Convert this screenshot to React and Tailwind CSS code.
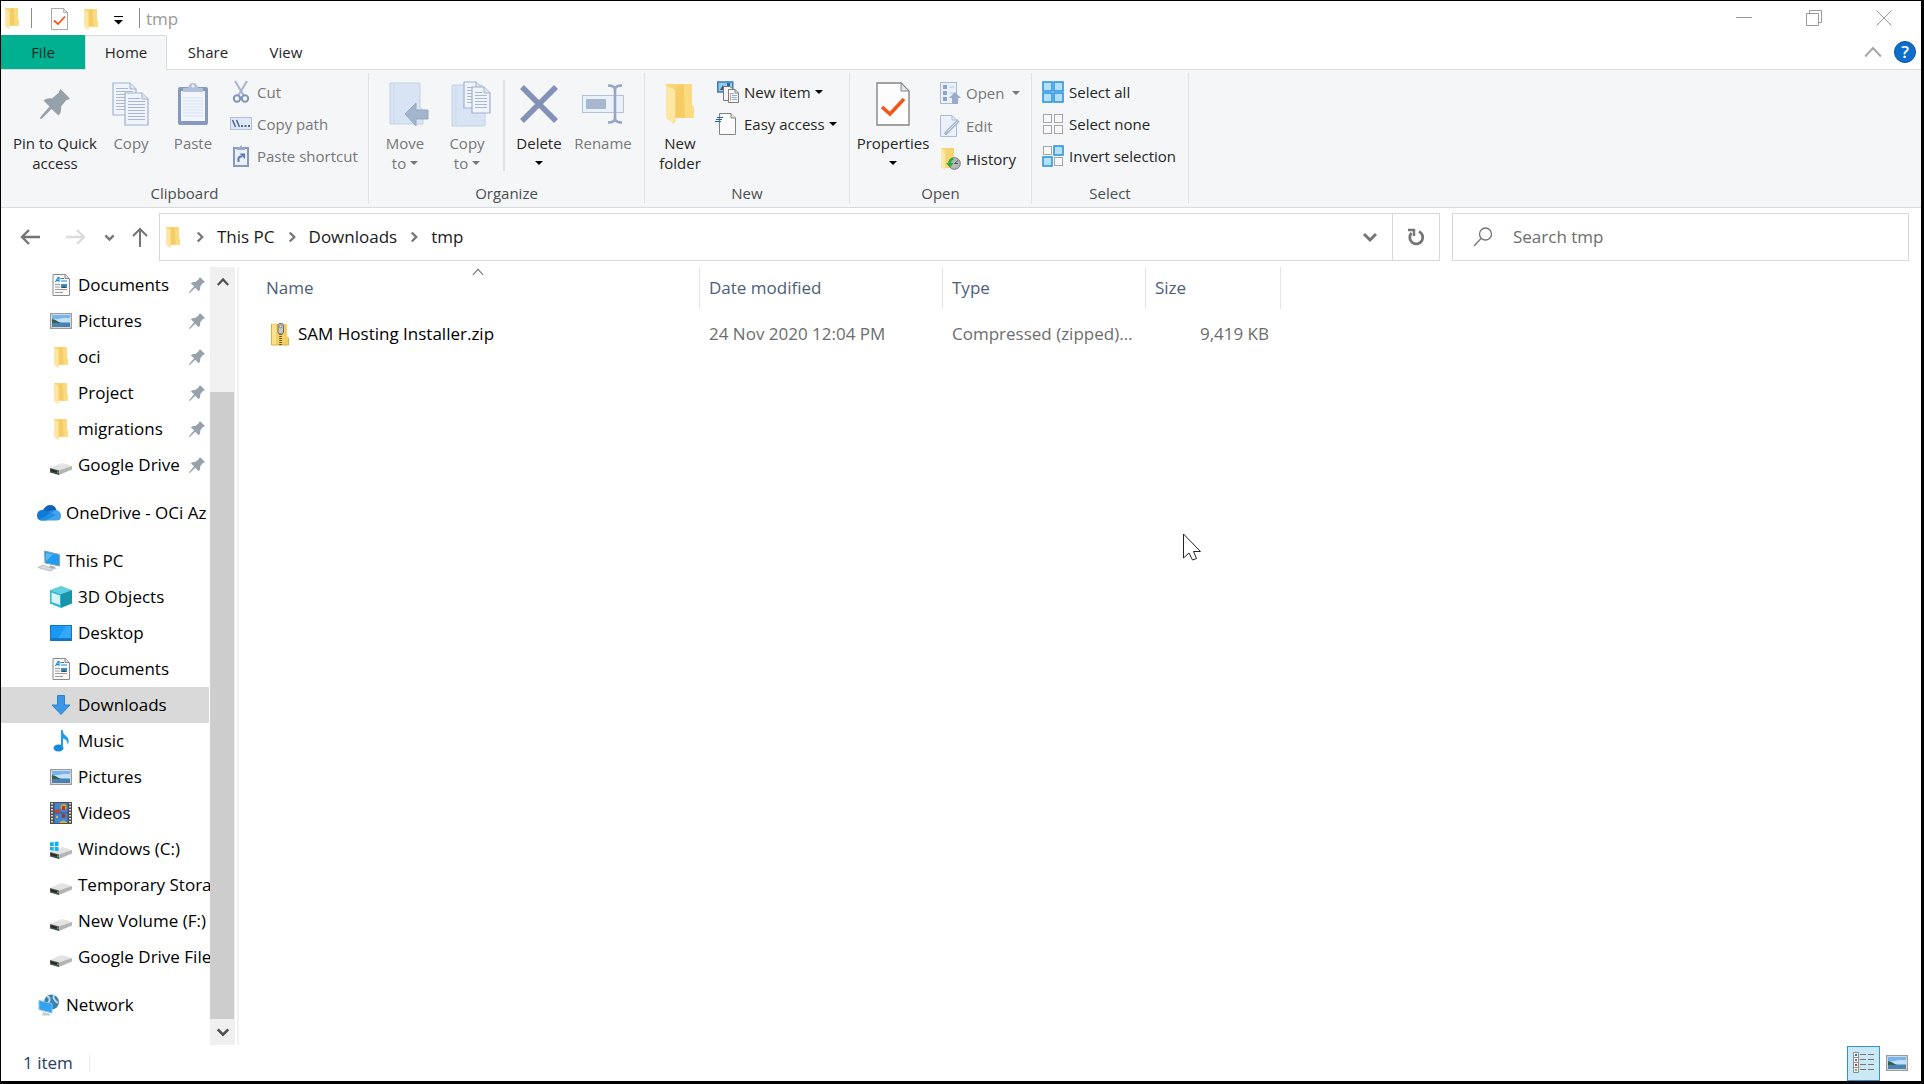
import React from "react";

function Folder({ className = "h-[21px] w-[14px]" }) {
  return (
    <svg viewBox="0 0 82 120" preserveAspectRatio="none" className={className} aria-hidden="true">
      <path d="M0 0H76V64L82 72V102H20L0 98Z" fill="#f9d673" />
      <path d="M26 12L48 0H76V64L64 100H26Z" fill="#f5ca62" opacity=".8" />
      <path d="M52 0H76V64L82 72V102H56Z" fill="#fadb80" />
      <path d="M0 4L27 18V104L23 120L0 103Z" fill="#fce7a6" />
      <path d="M23 108V120L31 104Z" fill="#f7dc94" />
    </svg>
  );
}

function PageCheck({ className }) {
  return (
    <svg viewBox="0 0 34 44" className={className} aria-hidden="true">
      <path d="M1 1H25L33 9V43H1Z" fill="#fdfdfd" stroke="#858585" strokeWidth="1.4" />
      <path d="M25 1V9H33Z" fill="#e3e3e3" stroke="#858585" strokeWidth="1" />
      <path d="M6 25L14 32L28 17" fill="none" stroke="#f1571c" strokeWidth="3.6" />
    </svg>
  );
}

function Pin({ className, color = "#97a1ac" }) {
  return (
    <svg viewBox="0 0 30 30" className={className} aria-hidden="true">
      <path d="M20.500 0L30 9.500L27.500 11L26.500 11L21 17.500C21.500 21 21 24 18.500 26.500L11.500 20L2 29.500L0 30L.5 28L9.500 17.500L3.500 11.500C6 9.500 9 9 12 9.500L19 3.500V2.500Z" fill={color} />
    </svg>
  );
}

function Sheet({ x, y, w, h }) {
  const lines = [];
  for (let ly = y + 6; ly < y + h - 3; ly += 3) lines.push(ly);
  return (
    <g>
      <path d={`M${x} ${y}h${w - 6}l6 6v${h - 6}h${-w}z`} fill="#f1f5fb" stroke="#9fb2cf" strokeWidth="1.2" />
      <path d={`M${x + w - 6} ${y}v6h6`} fill="#dfe8f5" stroke="#9fb2cf" strokeWidth="1" />
      {lines.map((ly) => (
        <path key={ly} d={`M${x + 3} ${ly - 0.5}h${w - (ly < y + 9 ? 11 : 6)}`} stroke="#a9b8cf" strokeWidth="1" />
      ))}
    </g>
  );
}

const CopyBig = () => (
  <svg viewBox="0 0 38 44" className="h-11 w-[38px]" aria-hidden="true">
    <Sheet x={1} y={1} w={23} h={32} />
    <Sheet x={13} y={11} w={23} h={32} />
  </svg>
);

const PasteBig = () => (
  <svg viewBox="0 0 32 44" className="h-11 w-8" aria-hidden="true">
    <rect x="1" y="5" width="30" height="38" rx="2" fill="#8799be" />
    <rect x="4" y="9" width="24" height="30" fill="#f2f6fc" />
    <path d="M6 16H26M6 19H26M6 22H26M6 25H26M6 28H26M6 31H26M6 34H26" stroke="#d3dfef" />
    <path d="M6 10V6H11Q12 1 16 1T21 6H26V10Z" fill="#b2c1d8" />
    <circle cx="16" cy="4" r="1.500" fill="#f2f6fc" />
  </svg>
);

const Cut = () => (
  <svg viewBox="0 0 18 24" className="h-6 w-[18px]" aria-hidden="true">
    <path d="M3 1L12 16M15 1L6 16" stroke="#a7b5cc" strokeWidth="2" />
    <circle cx="5" cy="18.500" r="3.200" fill="none" stroke="#8094bb" strokeWidth="2" />
    <circle cx="13" cy="18.500" r="3.200" fill="none" stroke="#8094bb" strokeWidth="2" />
  </svg>
);

const CopyPath = () => (
  <svg viewBox="0 0 22 14" className="h-3.5 w-[22px]" aria-hidden="true">
    <rect x=".5" y=".5" width="21" height="12" fill="#dfe9f6" stroke="#afc1dc" />
    <path d="M2.500 3L5.500 10M6.500 3L9.500 10" stroke="#51658f" strokeWidth="1.500" />
    <path d="M11 9H13M14.500 9H16.500M18 9H20" stroke="#51658f" strokeWidth="1.800" />
  </svg>
);

const PasteShortcut = () => (
  <svg viewBox="0 0 16 22" className="h-[22px] w-4" aria-hidden="true">
    <rect x="1" y="3" width="14" height="18" fill="#e9f0fa" stroke="#8799be" strokeWidth="2" />
    <path d="M4 5V2.500H6.500L8 0L9.500 2.500H12V5Z" fill="#9aabc8" />
    <path d="M5.500 17V13.500Q5.500 11.500 9 11.500" fill="none" stroke="#5f79ad" strokeWidth="2" />
    <path d="M6.500 8.500H12V14Z" fill="#5f79ad" />
  </svg>
);

const MoveTo = () => (
  <svg viewBox="0 0 40 44" className="ml-[7px] h-11 w-10" aria-hidden="true">
    <path d="M1 1H31V25L34 28V42H1Z" fill="#d8e4f3" stroke="#c3d2e6" />
    <path d="M5 1V42" stroke="#cbd9eb" />
    <path d="M16 32L27 21V28H39V37H27V44Z" fill="#a3b5cc" stroke="#93a8c3" />
  </svg>
);

const CopyTo = () => (
  <svg viewBox="0 0 40 46" className="ml-[7px] h-[46px] w-10" aria-hidden="true">
    <path d="M1 4H31V28L34 31V45H1Z" fill="#d8e4f3" stroke="#c3d2e6" />
    <path d="M5 4V45" stroke="#cbd9eb" />
    <Sheet x={13} y={1} w={18} h={26} />
    <Sheet x={21} y={6} w={18} h={26} />
  </svg>
);

const Delete = () => (
  <svg viewBox="0 0 38 38" className="h-[38px] w-[38px]" aria-hidden="true">
    <path d="M2 2L36 36M36 2L2 36" stroke="#8292b6" strokeWidth="5.500" />
  </svg>
);

const Rename = () => (
  <svg viewBox="0 0 42 40" className="h-10 w-[42px]" aria-hidden="true">
    <rect x=".5" y="11.500" width="41" height="17" fill="#e9f1fb" stroke="#b2c3db" />
    <rect x="4" y="15" width="20" height="10" fill="#a7b7d0" />
    <path d="M26 1.500Q33 1.500 33 6Q33 1.500 40 1.500M33 4V36M26 38.500Q33 38.500 33 34Q33 38.500 40 38.500" fill="none" stroke="#93a6c5" strokeWidth="2.600" />
  </svg>
);

const NewItem = () => (
  <svg viewBox="0 0 22 22" className="h-[22px] w-[22px]" aria-hidden="true">
    <rect x=".8" y="1" width="15" height="10" fill="#8fcdf2" stroke="#3e7bb4" strokeWidth="1.500" />
    <path d="M3 9L6 4L8 9Z" fill="#49505c" />
    <path d="M10 2V5H13V2Z" fill="#2769a3" />
    <path d="M6.500 5.500H13L16 8V19.500H6.500Z" fill="#f5f5f5" stroke="#7b7b7b" />
    <path d="M11.500 8.500H18L21.500 12V21.500H11.500Z" fill="#fff" stroke="#7b7b7b" />
    <path d="M18 8.500V12H21.500" fill="none" stroke="#7b7b7b" />
    <path d="M13 12.500H17M15 14.500H20M15 16.500H20M15 18.500H20" stroke="#79b4e6" />
    <path d="M13.500 12V20" stroke="#ef9a7e" />
  </svg>
);

const EasyAccess = () => (
  <svg viewBox="0 0 22 24" className="-ml-1 h-6 w-[22px]" aria-hidden="true">
    <path d="M4.500 1.500H16L20.500 6V22.500H4.500Z" fill="#fbfbfb" stroke="#858585" />
    <path d="M16 1.500V6H20.500" fill="#e6e6e6" stroke="#858585" />
    <path d="M2 5.500H8M1 7.500H7M0 9.500H6" stroke="#1d62ab" strokeWidth="1.200" />
  </svg>
);

const OpenIcon = () => (
  <svg viewBox="0 0 22 24" className="h-6 w-[22px]" aria-hidden="true">
    <rect x="1.500" y="1.500" width="16" height="21" fill="#ebf1f9" stroke="#a9bbd5" />
    <path d="M4 4H8V8H4ZM4 10H8V14H4ZM4 16H8V20H4Z" fill="#8ea3c5" />
    <path d="M10.500 6H15.500M10.500 12H15.500" stroke="#b9c8dd" />
    <path d="M10 17L16 11L22 17H19V23H13V17Z" fill="#99abc8" />
  </svg>
);

const EditIcon = () => (
  <svg viewBox="0 0 22 24" className="h-6 w-[22px]" aria-hidden="true">
    <path d="M1.500 1.500H13L17.500 6V22.500H1.500Z" fill="#eaf1fa" stroke="#a9bbd5" />
    <path d="M13 1.500V6H17.500" fill="none" stroke="#a9bbd5" />
    <path d="M19.500 6.500L8 18L6 20.500" stroke="#a4b6d1" strokeWidth="3.200" />
    <path d="M18.500 7.500L9 17" stroke="#dce6f3" />
  </svg>
);

const HistoryIcon = () => (
  <svg viewBox="0 0 22 24" className="h-6 w-[22px]" aria-hidden="true">
    <path d="M2 1H15V21H2Z" fill="#f8d574" />
    <path d="M2 1L6 4V23L2 20Z" fill="#fce9ad" />
    <circle cx="15.500" cy="16.500" r="5.800" fill="#b7b7b7" stroke="#777" />
    <path d="M15.500 16.500L19 13.500M15.500 16.500H19" stroke="#555" />
    <path d="M14 10.500Q9 11.500 9.500 16H7L11 20.500L14.500 16H12Q12 13.500 14.500 12.500Z" fill="#27ad3e" />
  </svg>
);

function Squares({ on }) {
  const spots = [[1, 1], [12, 1], [1, 12], [12, 12]];
  return (
    <svg viewBox="0 0 22 22" className="h-[22px] w-[22px]" aria-hidden="true">
      {spots.map(([x, y], i) =>
        on[i] ? (
          <rect key={i} x={x} y={y} width="9" height="9" fill="#b5e0fb" stroke="#2f96e4" strokeWidth="1.600" />
        ) : (
          <rect key={i} x={x + 0.5} y={y + 0.5} width="8" height="8" fill="#f8f8f8" stroke="#a6a6a6" />
        )
      )}
    </svg>
  );
}

const DocIcon = () => (
  <svg viewBox="0 0 18 22" className="h-[22px] w-[18px]" aria-hidden="true">
    <path d="M1 .5H13.500L17.500 4.500V21.500H1Z" fill="#fafafa" stroke="#8b8b8b" />
    <path d="M13 .5V4.500H17.500" fill="#e5e5e5" stroke="#8b8b8b" />
    <path d="M3.500 8L6 3.500H7V8M4.500 6.500H7M8.500 4.500H12M9 7H15" stroke="#1f87cf" strokeWidth="1.200" fill="none" />
    <path d="M3 10.500H8M3 13H8M3 15.500H15M3 18.500H11" stroke="#9b9b9b" />
    <rect x="9" y="10" width="6" height="4" fill="#3b8fc9" />
    <path d="M9 14L12 12L15 14Z" fill="#3c4a54" />
  </svg>
);

const PicIcon = () => (
  <svg viewBox="0 0 22 16" className="h-4 w-[22px]" aria-hidden="true">
    <rect x=".7" y=".7" width="20.600" height="14.600" fill="#fff" stroke="#9c9c9c" strokeWidth="1.400" />
    <rect x="2" y="2" width="18" height="12" fill="#74b5f0" />
    <path d="M2 6H8L14 5H20V9H2Z" fill="#c5e0f4" />
    <path d="M2 6Q5 6 8 8.500T15 10H2Z" fill="#355f56" />
    <path d="M2 10H20V14H2Z" fill="#4c81ab" />
  </svg>
);

const Drive = ({ win }) => (
  <svg viewBox="0 0 22 22" className="h-[22px] w-[22px]" aria-hidden="true">
    <path d="M0 14L10 9.500Q12 9 14 9.500L22 12L9 17Z" fill="#e3e3e3" />
    <path d="M9 16.500L22 12V15.500L9 21Z" fill="#b4b4b4" />
    <path d="M0 14L9 16.500V21L0 18.500Z" fill="#4a4a4a" />
    <path d="M1 15.500L7 17.200V18.800L1 17Z" fill="#232323" />
    <rect x="7" y="17.500" width="1.500" height="1.500" fill="#2fd44b" />
    {win && <path d="M0 4.500L3.700 4V8H0ZM4.700 4L8.500 3.500V8H4.700ZM0 9H3.700V12.700L0 12.300ZM4.700 9H8.500V13L4.700 12.700Z" fill="#0fb0ef" />}
  </svg>
);

const Cloud = () => (
  <svg viewBox="0 0 24 16" className="h-4 w-6" aria-hidden="true">
    <path d="M6 5Q9 0 13 0Q18 0 19.500 5L12 9Z" fill="#0f62b8" />
    <path d="M5 15.500Q0 15.500 0 10.500Q0 5.500 5 5Q8 4 11 6.500L19 10L9 15.500Z" fill="#1079d6" />
    <path d="M11 6.500Q15 4.500 19 5Q24 6 24 11Q24 15.500 19.500 15.500H5Q3 15.500 2 14.500L13 8.500Z" fill="#2493e8" opacity=".85" />
  </svg>
);

const ThisPC = () => (
  <svg viewBox="0 0 24 22" className="h-[22px] w-6" aria-hidden="true">
    <path d="M7.500 1L22.500 4.500V16L8 13Z" fill="#1f9bf0" stroke="#8fa2b0" />
    <path d="M9 3L16 4.500L9 11Z" fill="#57bdf9" />
    <path d="M13 15.500L17 16.500L20 19L12 17.500Z" fill="#a5adb3" />
    <path d="M1 17.500L6 15L17 19L13 21Z" fill="#d5dade" stroke="#a7b0b7" strokeWidth=".7" />
  </svg>
);

const Cube = () => (
  <svg viewBox="0 0 22 22" className="h-[22px] w-[22px]" aria-hidden="true">
    <path d="M11 0L22 4L11 8L0 4Z" fill="#5fd0dc" />
    <path d="M0 4L11 8V22L0 17.500Z" fill="#2fb6cb" />
    <path d="M1.500 6.500L10 9.500V19L1.500 16Z" fill="#d6f3f5" />
    <path d="M22 4L11 8V22L22 17.500Z" fill="#1795ad" />
  </svg>
);

const Desk = () => (
  <svg viewBox="0 0 22 16" className="h-4 w-[22px]" aria-hidden="true">
    <rect x=".5" y=".5" width="21" height="15" fill="#1997f2" stroke="#0e76c4" />
    <path d="M16 1H21V13L8 13Z" fill="#34a8f8" />
    <path d="M1 14H21" stroke="#0a5a9c" />
  </svg>
);

const Down = () => (
  <svg viewBox="0 0 20 20" className="h-5 w-5" aria-hidden="true">
    <path d="M6.500 .5H13.500V10H19L10 19.500L1 10H6.500Z" fill="#3b97e4" stroke="#2a83d0" />
  </svg>
);

const Music = () => (
  <svg viewBox="0 0 18 22" className="h-[22px] w-[18px]" aria-hidden="true">
    <ellipse cx="6.500" cy="18" rx="5" ry="3.600" fill="#1489dc" />
    <path d="M9 0H10.500Q11 4 14 6Q18.500 9 15.500 15Q16 10 11 8.500V18H9Z" fill="#1e9cec" />
  </svg>
);

const Video = () => (
  <svg viewBox="0 0 22 22" className="h-[22px] w-[22px]" aria-hidden="true">
    <rect width="22" height="22" fill="#4f4f4f" />
    <path d="M2 1V22M20 1V22" stroke="#e8e8e8" strokeWidth="1.800" strokeDasharray="1.500 1.500" />
    <rect x="4.500" y="1" width="13" height="9.500" fill="#3f86d8" />
    <rect x="4.500" y="11.500" width="13" height="9.500" fill="#3f86d8" />
    <circle cx="13.500" cy="5" r="3" fill="#dca423" />
    <path d="M12 4H15V8H12Z" fill="#c2332d" />
    <path d="M4.500 8L9 7L11 10.500H4.500Z" fill="#c4422c" />
    <circle cx="13.500" cy="14" r="2" fill="#a6322d" />
    <path d="M9 21Q13 16 17.500 21Z" fill="#e0b32e" />
    <circle cx="7" cy="15" r="1" fill="#f0c73c" />
  </svg>
);

const Net = () => (
  <svg viewBox="0 0 24 22" className="h-[22px] w-6" aria-hidden="true">
    <circle cx="14.500" cy="8" r="7.500" fill="#3b7fae" />
    <path d="M10 2Q14 4 12 8T15 14M17 1Q15 5 21 9" stroke="#b9d8e8" strokeWidth="2" fill="none" />
    <path d="M2 6.500L15 9.500V19L2 15.500Z" fill="#34a4ef" stroke="#7ec3ee" />
    <path d="M6 18L12 19.500L14 21.500H5Z" fill="#c5ccd1" />
  </svg>
);

const ZipIcon = () => (
  <svg viewBox="0 0 18 23" className="h-[23px] w-[18px]" aria-hidden="true">
    <path d="M0 1H16V13L18 15V22H0Z" fill="#f5cf62" />
    <path d="M0 1L5 3V22H0Z" fill="#fbe28f" />
    <path d="M.5 1V22H17.500V15" fill="none" stroke="#dcae3a" />
    <path d="M9.500 9V22" stroke="#5a5134" strokeWidth="2.600" strokeDasharray="1 1" />
    <rect x="7" y="0.500" width="5.500" height="10.500" rx="2" fill="#c7c7c7" stroke="#6d6d6d" />
    <circle cx="9.700" cy="3.500" r="1.300" fill="#fff" stroke="#666" strokeWidth=".8" />
  </svg>
);

const Caret = ({ className = "" }) => (
  <svg viewBox="0 0 8 4" className={"h-1 w-2 shrink-0 " + className} aria-hidden="true">
    <path d="M0 0H8L4 4Z" fill="currentColor" />
  </svg>
);

function Chevron({ d, className, w = 2.6 }) {
  return (
    <svg viewBox="0 0 16 16" className={className} aria-hidden="true">
      <path d={d} fill="none" stroke="currentColor" strokeWidth={w} />
    </svg>
  );
}
const UP = "M1 12L8 4.500L15 12";
const DN = "M2 5L8 11L14 5";
const RT = "M5 2L11 8L5 14";

function Big({ icon, lines, width, off, caret }) {
  return (
    <button className={`flex shrink-0 flex-col items-center pt-2.5 leading-5 ${width} ${off ? "text-[#777777]" : "text-[#262626]"}`}>
      <span className="mb-[5px] flex h-12 items-center justify-center">{icon}</span>
      {lines.map((l, i) => (
        <span key={l} className="flex items-center gap-1 whitespace-nowrap">
          {l}
          {caret === "inline" && i === lines.length - 1 && <Caret />}
        </span>
      ))}
      {caret === "below" && <Caret className="mt-2 text-black" />}
    </button>
  );
}

function Small({ icon, label, off, caret, wide }) {
  return (
    <button className={`flex h-8 items-center gap-1 whitespace-nowrap pl-1 ${off ? "text-[#777777]" : "text-[#262626]"}`}>
      <span className="flex w-6 justify-center">{icon}</span>
      {label}
      {caret && <Caret className={wide ? "ml-1" : "text-black"} />}
    </button>
  );
}

function Group({ title, width, pad, children }) {
  return (
    <section aria-label={title} className={`my-[3px] flex shrink-0 flex-col border-r border-[#e0e2e5] ${width}`}>
      <div className={`-mt-[3px] flex h-[113px] ${pad}`}>{children}</div>
      <h2 className="text-center leading-[22px] text-[#4d4d4d]">{title}</h2>
    </section>
  );
}

function Ribbon() {
  return (
    <div className="flex h-[139px] border-y border-[#dadbdc] bg-[#f5f6f7] text-[15px]">
      <Group title="Clipboard" width="w-[368px]" pad="pl-2">
        <Big width="w-[92px]" icon={<Pin className="h-[30px] w-[30px]" />} lines={["Pin to Quick", "access"]} />
        <Big width="w-[60px]" off icon={<CopyBig />} lines={["Copy"]} />
        <Big width="w-[64px]" off icon={<PasteBig />} lines={["Paste"]} />
        <div className="flex flex-col pt-1.5">
          <Small off icon={<Cut />} label="Cut" />
          <Small off icon={<CopyPath />} label="Copy path" />
          <Small off icon={<PasteShortcut />} label="Paste shortcut" />
        </div>
      </Group>
      <Group title="Organize" width="w-[276px]" pad="pl-1">
        <Big width="w-[64px]" off icon={<MoveTo />} lines={["Move", "to"]} caret="inline" />
        <Big width="w-[60px]" off icon={<CopyTo />} lines={["Copy", "to"]} caret="inline" />
        <span className="ml-1.5 mt-2.5 h-[91px] w-0.5 bg-[#dfe1e4]" />
        <Big width="w-[68px]" icon={<Delete />} lines={["Delete"]} caret="below" />
        <Big width="w-[60px]" off icon={<Rename />} lines={["Rename"]} />
      </Group>
      <Group title="New" width="w-[205px]" pad="pl-[3px]">
        <Big width="w-[64px]" icon={<Folder className="h-10 w-7" />} lines={["New", "folder"]} />
        <div className="flex flex-col pt-1.5">
          <Small icon={<NewItem />} label="New item" caret />
          <Small icon={<EasyAccess />} label="Easy access" caret />
        </div>
      </Group>
      <Group title="Open" width="w-[182px]" pad="pl-0.5">
        <Big width="w-[82px]" icon={<PageCheck className="h-11 w-[34px]" />} lines={["Properties"]} caret="below" />
        <div className="flex flex-col gap-px pt-[7px]">
          <Small off icon={<OpenIcon />} label="Open" caret wide />
          <Small off icon={<EditIcon />} label="Edit" />
          <Small icon={<HistoryIcon />} label="History" />
        </div>
      </Group>
      <Group title="Select" width="w-[157px]" pad="pl-[5px]">
        <div className="flex flex-col pt-1.5">
          <Small icon={<Squares on={[1, 1, 1, 1]} />} label="Select all" />
          <Small icon={<Squares on={[0, 0, 0, 0]} />} label="Select none" />
          <Small icon={<Squares on={[0, 1, 1, 0]} />} label="Invert selection" />
        </div>
      </Group>
    </div>
  );
}

const F = <Folder />;
const NAV = [
  [
    { icon: <DocIcon />, label: "Documents", pin: true, sub: true },
    { icon: <PicIcon />, label: "Pictures", pin: true, sub: true },
    { icon: F, label: "oci", pin: true, sub: true },
    { icon: F, label: "Project", pin: true, sub: true },
    { icon: F, label: "migrations", pin: true, sub: true },
    { icon: <Drive />, label: "Google Drive", pin: true, sub: true },
  ],
  [{ icon: <Cloud />, label: "OneDrive - OCi Az" }],
  [
    { icon: <ThisPC />, label: "This PC" },
    { icon: <Cube />, label: "3D Objects", sub: true },
    { icon: <Desk />, label: "Desktop", sub: true },
    { icon: <DocIcon />, label: "Documents", sub: true },
    { icon: <Down />, label: "Downloads", sub: true, selected: true },
    { icon: <Music />, label: "Music", sub: true },
    { icon: <PicIcon />, label: "Pictures", sub: true },
    { icon: <Video />, label: "Videos", sub: true },
    { icon: <Drive win />, label: "Windows (C:)", sub: true },
    { icon: <Drive />, label: "Temporary Stora", sub: true },
    { icon: <Drive />, label: "New Volume (F:)", sub: true },
    { icon: <Drive />, label: "Google Drive File", sub: true },
  ],
  [{ icon: <Net />, label: "Network" }],
];

function Sidebar() {
  return (
    <nav aria-label="Folders" className="flex w-[208px] shrink-0 flex-col gap-3">
      {NAV.map((group, g) => (
        <ul key={g}>
          {group.map((n) => (
            <li key={n.label}>
              <a
                href="#"
                className={`flex h-9 items-center gap-[5px] ${n.sub ? "pl-12" : "pl-9"} ${n.selected ? "bg-[#d9d9d9]" : ""}`}
              >
                <span className="flex w-6 shrink-0 justify-center">{n.icon}</span>
                <span className="flex-1 whitespace-nowrap">{n.label}</span>
                {n.pin && <Pin className="mr-1 h-4 w-4 shrink-0" />}
              </a>
            </li>
          ))}
        </ul>
      ))}
    </nav>
  );
}

function Scrollbar() {
  return (
    <div className="ml-px flex w-[25px] shrink-0 flex-col bg-[#f0f0f0] text-[#505050]">
      <button aria-label="Scroll up" className="flex h-[30px] items-center justify-center">
        <Chevron d={UP} className="h-3 w-3" w={3} />
      </button>
      <div className="mt-[95px] mr-px flex-1 bg-[#cdcdcd]" />
      <button aria-label="Scroll down" className="flex h-[26px] items-center justify-center">
        <Chevron d={DN} className="h-3.5 w-3.5" w={3} />
      </button>
    </div>
  );
}

function Files() {
  const th = "relative h-[42px] border-r border-[#e5e5e5] pl-[9px] text-left font-normal text-[#4c607a]";
  return (
    <main className="ml-[18px] flex-1">
      <table className="w-[1024px] table-fixed border-separate border-spacing-0">
        <colgroup>
          <col className="w-[443px]" />
          <col className="w-[243px]" />
          <col className="w-[203px]" />
          <col className="w-[135px]" />
        </colgroup>
        <thead>
          <tr>
            <th className={th + " pl-3"}>
              Name
              <Chevron d={UP} className="absolute inset-x-0 -top-px mx-auto h-3 w-3 text-[#6d6d6d]" w={1.4} />
            </th>
            <th className={th}>Date modified</th>
            <th className={th}>Type</th>
            <th className={th}>Size</th>
          </tr>
        </thead>
        <tbody>
          <tr className="text-[#6d6d6d]">
            <td className="h-[50px] text-black">
              <span className="flex items-center gap-[9px] pl-3.5">
                <ZipIcon />
                SAM Hosting Installer.zip
              </span>
            </td>
            <td className="pl-[9px]">24 Nov 2020 12:04 PM</td>
            <td className="whitespace-nowrap pl-[9px]">Compressed (zipped)...</td>
            <td className="pr-3 text-right">9,419 KB</td>
          </tr>
        </tbody>
      </table>
    </main>
  );
}

export default function App() {
  return (
    <div className="relative flex min-h-screen flex-col border-b-[3px] border-l border-r-[3px] border-t border-black bg-white font-['Open_Sans','Noto_Sans',sans-serif] text-[17px] text-black">
      <header className="flex h-[34px] items-center">
        <div className="flex flex-1 items-center pl-1">
          <Folder />
          <span className="ml-3 h-5 w-px bg-[#8c8c8c]" />
          <button aria-label="Properties" className="ml-[19px] pt-0.5"><PageCheck className="h-[22px] w-[17px]" /></button>
          <button aria-label="New folder" className="ml-4 pt-0.5"><Folder /></button>
          <button aria-label="Customize toolbar" className="ml-4 pt-1">
            <svg viewBox="0 0 9 9" className="h-[9px] w-[9px]"><path d="M0 .5H9" stroke="#000" /><path d="M0 4H9L4.500 8.500Z" /></svg>
          </button>
          <span className="ml-4 h-5 w-px bg-[#8c8c8c]" />
          <h1 className="ml-1.5 pt-px leading-6 text-[#999999]">tmp</h1>
        </div>
        <div className="flex pr-0.5 text-[#999999]">
          <button aria-label="Minimize" className="flex w-[70px] justify-center">
            <svg viewBox="0 0 16 16" className="h-4 w-4"><path d="M0 7.500H16" stroke="currentColor" /></svg>
          </button>
          <button aria-label="Restore" className="flex w-[70px] justify-center">
            <svg viewBox="0 0 16 16" className="h-4 w-4" fill="none" stroke="currentColor"><path d="M.5 3.500H12.500V15.500H.5ZM3.500 3.500V.5H15.500V12.500H12.500" /></svg>
          </button>
          <button aria-label="Close" className="flex w-[70px] justify-center">
            <svg viewBox="0 0 16 16" className="h-4 w-4" stroke="currentColor"><path d="M.5 .5L15.500 15.500M15.500 .5L.5 15.500" /></svg>
          </button>
        </div>
      </header>

      <div className="flex h-[34px] items-stretch text-[15px] text-[#262626]">
        <button className="w-[84px] bg-[#00b091] text-[#0b2a24]">File</button>
        <button className="relative z-10 -mb-px w-[82px] border-x border-t border-[#dadbdc] bg-[#f5f6f7] pb-0.5">Home</button>
        <button className="w-[82px]">Share</button>
        <button className="w-[74px]">View</button>
        <div className="ml-auto flex items-center gap-3 pr-[5px]">
          <button aria-label="Collapse ribbon" className="text-[#a8a8a8]"><Chevron d={UP} className="h-[18px] w-[18px]" w={1.8} /></button>
          <button aria-label="Help" className="flex h-[22px] w-[22px] items-center justify-center rounded-full border border-[#08509e] bg-[#0d6fcb] text-[17px] font-semibold text-white">?</button>
        </div>
      </div>

      <Ribbon />

      <div className="mb-1.5 mt-[5px] flex h-12 items-stretch pl-1.5 pr-3">
        <button aria-label="Back" className="flex w-[46px] items-center justify-center pr-px text-[#757575]">
          <svg viewBox="0 0 20 16" className="h-4 w-5" fill="none" stroke="currentColor" strokeWidth="2.400"><path d="M20 8H2M9 1L2 8L9 15" /></svg>
        </button>
        <button aria-label="Forward" className="flex w-[46px] items-center justify-center text-[#dcdcdc]">
          <svg viewBox="0 0 20 16" className="h-4 w-5" fill="none" stroke="currentColor" strokeWidth="2.400"><path d="M0 8H18M11 1L18 8L11 15" /></svg>
        </button>
        <button aria-label="Recent locations" className="flex w-[22px] items-center justify-center pr-0.5 text-[#757575]">
          <Chevron d={DN} className="h-[11px] w-[11px]" w={3.4} />
        </button>
        <button aria-label="Up" className="flex w-[38px] items-center justify-center text-[#757575]">
          <svg viewBox="0 0 16 20" className="h-5 w-4" fill="none" stroke="currentColor" strokeWidth="2"><path d="M8 20V2M1 9L8 2L15 9" /></svg>
        </button>
        <div className="flex flex-1 items-center border border-[#d9d9d9] pl-1.5">
          <Folder />
          {["This PC", "Downloads", "tmp"].map((c, i) => (
            <React.Fragment key={c}>
              <Chevron d={RT} className={`mr-[11px] h-3 w-3 text-[#757575] ${i ? "ml-[11px]" : "ml-3.5"}`} w={3} />
              <a href="#" className="text-[#1a1a1a]">{c}</a>
            </React.Fragment>
          ))}
          <button aria-label="Previous locations" className="ml-auto mr-3.5 text-[#757575]">
            <Chevron d={DN} className="h-4 w-4" w={3} />
          </button>
          <button aria-label="Refresh" className="flex w-[47px] items-center justify-center self-stretch border-l border-[#d9d9d9] text-[#757575]">
            <svg viewBox="0 0 18 20" className="h-5 w-[18px]" fill="none" stroke="currentColor" strokeWidth="2.800"><path d="M12 4.500A6.500 6.500 0 1 1 4.500 6" /><path d="M1 3H7V9" strokeWidth="2.400" /></svg>
          </button>
        </div>
        <label className="ml-3 flex w-[457px] items-center border border-[#d9d9d9] pl-5">
          <svg viewBox="0 0 20 20" className="h-5 w-5 text-[#757575]" fill="none" stroke="currentColor" strokeWidth="1.300"><circle cx="12.500" cy="7" r="6" /><path d="M8 11.500L1 19" /></svg>
          <input type="search" aria-label="Search tmp" placeholder="Search tmp" className="ml-5 min-w-0 flex-1 bg-transparent outline-none placeholder:text-[#6d6d6d]" />
        </label>
      </div>

      <div className="flex flex-1">
        <Sidebar />
        <Scrollbar />
        <div className="ml-0.5 w-0.5 bg-[#f3f3f3]" />
        <Files />
      </div>

      <footer className="flex h-9 items-center text-[#24405f]">
        <span className="ml-[22px] mr-4">1 item</span>
        <span className="h-[18px] w-px bg-[#ececec]" />
        <button aria-label="Details view" aria-pressed="true" className="ml-auto flex h-[35px] w-[33px] items-center justify-center border border-[#2f94d4] bg-[#cbe8f6]">
          <svg viewBox="0 0 22 22" className="h-[22px] w-[22px]" fill="#fff" stroke="#8e8e8e">
            <path d="M.5 .5H5.500V5.500H.5ZM.5 5.500H5.500V10.500H.5ZM.5 10.500H5.500V15.500H.5ZM.5 15.500H5.500V20.500H.5Z" />
            <path d="M7 2.500H13M15 2.500H21M7 7.500H13M15 7.500H21M7 12.500H13M15 12.500H21M7 17.500H13M15 17.500H21" stroke="#777" />
            <path d="M2 3H4" stroke="#3665b5" strokeWidth="2" /><path d="M2 8H4" stroke="#777" strokeWidth="2" />
            <path d="M2 13H4" stroke="#c73a1d" strokeWidth="2" /><path d="M2 18H4" stroke="#7aa84a" strokeWidth="2" />
          </svg>
        </button>
        <button aria-label="Large icons view" className="ml-1.5 mr-[13px]"><PicIcon /></button>
      </footer>

      <svg viewBox="0 0 18 28" className="pointer-events-none absolute left-[1182px] top-[532px] h-7 w-[18px]" aria-hidden="true">
        <path d="M.5 1V25L6 20L9.500 27L13.500 25.500L10.500 18.500H17.500Z" fill="#fff" stroke="#22222e" />
      </svg>
    </div>
  );
}
